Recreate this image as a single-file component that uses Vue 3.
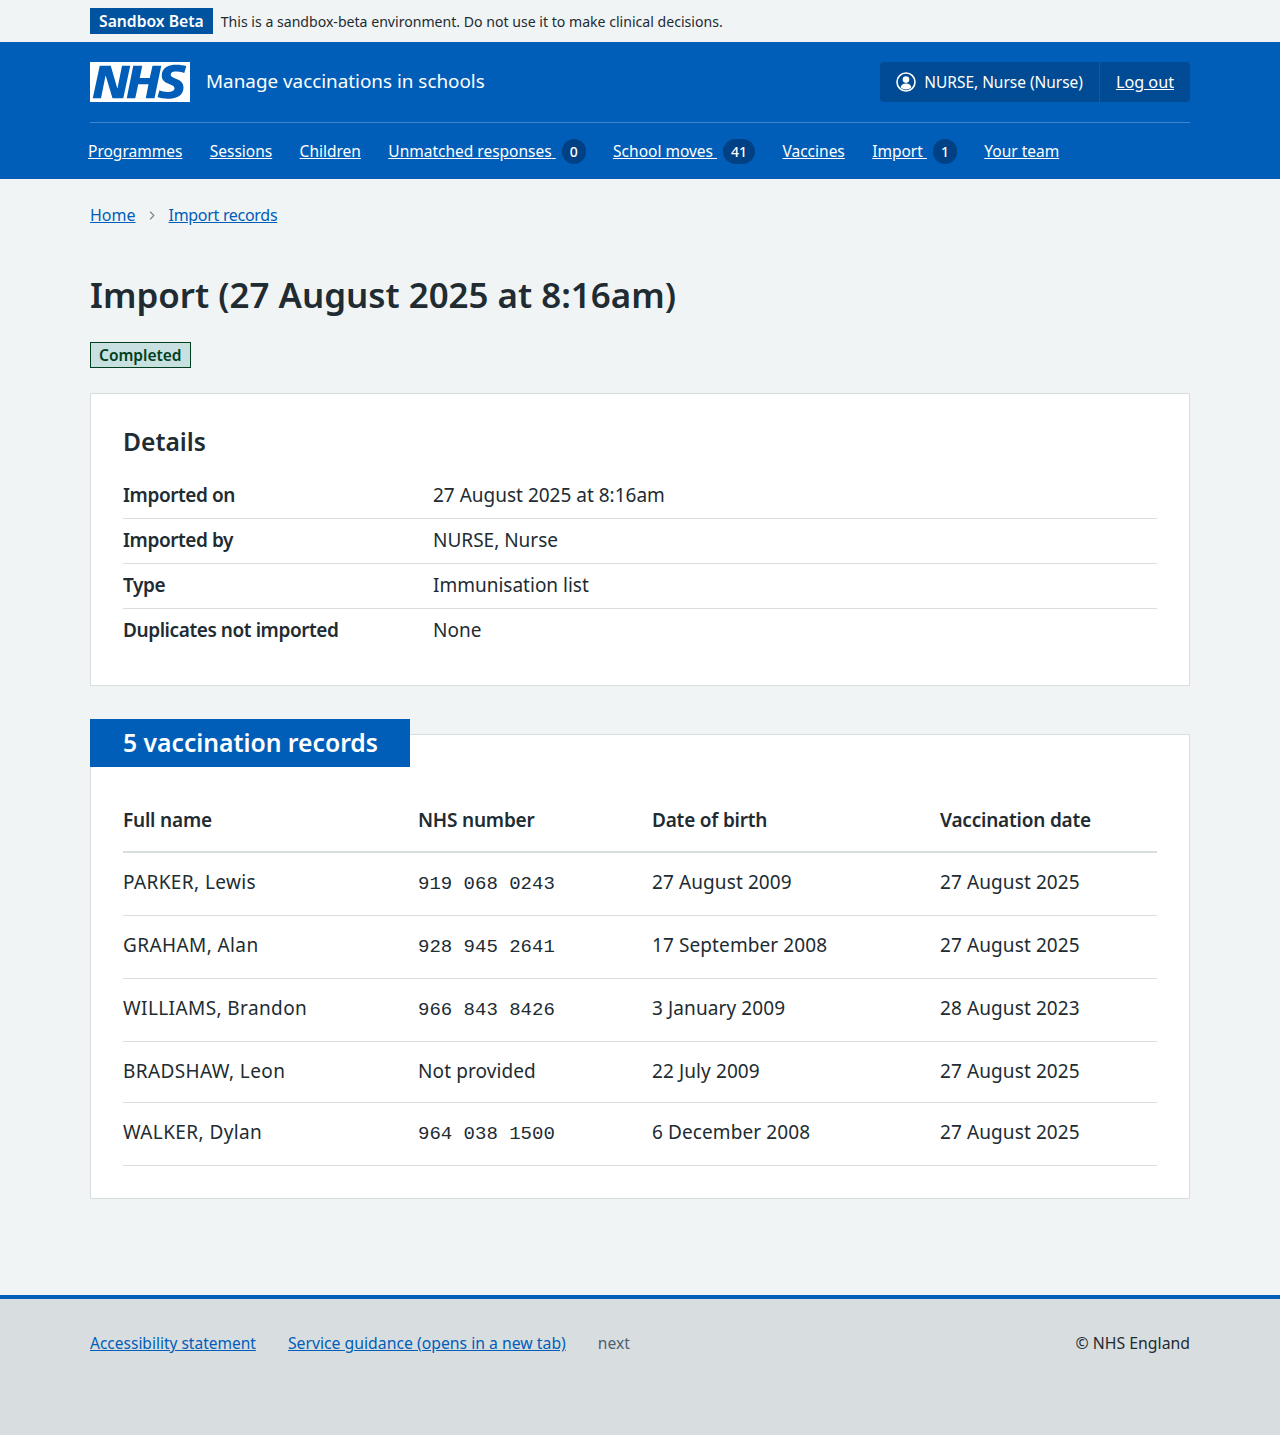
<script setup>
const nav = [
  { label: 'Programmes' },
  { label: 'Sessions' },
  { label: 'Children' },
  { label: 'Unmatched responses', count: 0 },
  { label: 'School moves', count: 41 },
  { label: 'Vaccines' },
  { label: 'Import', count: 1 },
  { label: 'Your team' },
]
const details = [
  ['Imported on', '27 August 2025 at 8:16am'],
  ['Imported by', 'NURSE, Nurse'],
  ['Type', 'Immunisation list'],
  ['Duplicates not imported', 'None'],
]
const records = [
  ['PARKER, Lewis', '919 068 0243', '27 August 2009', '27 August 2025'],
  ['GRAHAM, Alan', '928 945 2641', '17 September 2008', '27 August 2025'],
  ['WILLIAMS, Brandon', '966 843 8426', '3 January 2009', '28 August 2023'],
  ['BRADSHAW, Leon', null, '22 July 2009', '27 August 2025'],
  ['WALKER, Dylan', '964 038 1500', '6 December 2008', '27 August 2025'],
]
</script>

<template>
  <div class="page">
    <div class="banner">
      <div class="wrap banner-in">
        <strong class="sandbox">Sandbox Beta</strong>
        <span class="banner-text">This is a sandbox-beta environment. Do not use it to make clinical decisions.</span>
      </div>
    </div>

    <header class="header">
      <div class="wrap">
        <div class="head-row">
          <a class="brand" href="#">
            <svg class="logo" viewBox="0 0 40 16" width="100" height="40" aria-label="NHS">
              <path fill="#fff" d="M0 0h40v16H0z" />
              <path fill="#005eb8" d="M3.9 1.5h4.4l2.6 9h.1l1.8-9h3.3l-2.8 13H9l-2.7-9h-.1l-1.8 9H1.1M17.3 1.5h3.6l-1 4.9h4L25 1.5h3.5l-2.7 13h-3.5l1.1-5.6h-4.1l-1.2 5.6h-3.4M37.7 4.4c-.7-.3-1.6-.6-2.9-.6-1.4 0-2.5.2-2.5 1.3 0 1.8 5.1 1.2 5.1 5.1 0 3.6-3.3 4.5-6.4 4.5-1.3 0-2.9-.3-4-.7l.8-2.7c.7.4 2.1.7 3.2.7s2.8-.2 2.8-1.5c0-2.1-5.1-1.3-5.1-5 0-3.4 2.9-4.4 5.8-4.4 1.6 0 3.1.2 4 .6" />
            </svg>
            <span class="service">Manage vaccinations in schools</span>
          </a>
          <div class="account">
            <div class="account-user">
              <svg class="user-icon" viewBox="0 0 20 20" width="20" height="20">
                <circle cx="10" cy="10" r="9" fill="none" stroke="#fff" stroke-width="1.6" />
                <circle cx="10" cy="7.6" r="3.3" fill="#fff" />
                <path fill="#fff" d="M4.6 15.4c.5-2.6 2.4-3.9 5.4-3.9s4.900 1.300 5.400 3.900a7.900 7.900 0 0 1-10.800 0z" />
              </svg>
              <span>NURSE, Nurse (Nurse)</span>
            </div>
            <a class="logout" href="#">Log out</a>
          </div>
        </div>
        <nav class="nav">
          <a v-for="item in nav" :key="item.label" class="nav-link" href="#">
            <span class="nav-label">{{ item.label }}<template v-if="item.count !== undefined">&nbsp;</template></span>
            <span v-if="item.count !== undefined" class="count">{{ item.count }}</span>
          </a>
        </nav>
      </div>
    </header>

    <main class="wrap main">
      <div class="crumbs">
        <a class="crumb-home" href="#">Home</a>
        <svg class="chev" viewBox="0 0 8 12" width="6" height="9"><path d="M1.500 1l5 5-5 5" fill="none" stroke="#768692" stroke-width="1.500" /></svg>
        <a class="crumb-link" href="#">Import records</a>
      </div>

      <h1>Import (27 August 2025 at 8:16am)</h1>
      <div class="tag-row"><strong class="tag">Completed</strong></div>

      <section class="card details">
        <h2>Details</h2>
        <dl>
          <div v-for="row in details" :key="row[0]" class="d-row">
            <dt>{{ row[0] }}</dt>
            <dd>{{ row[1] }}</dd>
          </div>
        </dl>
      </section>

      <section class="card records">
        <h2 class="records-title">5 vaccination records</h2>
        <table>
          <colgroup>
            <col class="c1" /><col class="c2" /><col class="c3" /><col class="c4" />
          </colgroup>
          <thead>
            <tr><th>Full name</th><th>NHS number</th><th>Date of birth</th><th>Vaccination date</th></tr>
          </thead>
          <tbody>
            <tr v-for="r in records" :key="r[0]">
              <td class="name">{{ r[0] }}</td>
              <td><span v-if="r[1]" class="mono">{{ r[1] }}</span><template v-else>Not provided</template></td>
              <td>{{ r[2] }}</td>
              <td>{{ r[3] }}</td>
            </tr>
          </tbody>
        </table>
      </section>
    </main>

    <footer class="footer">
      <div class="wrap foot-in">
        <div class="foot-links">
          <a class="foot-a11y" href="#">Accessibility statement</a>
          <a class="foot-guide" href="#">Service guidance (opens in a new tab)</a>
          <span class="next">next</span>
        </div>
        <span class="copy">© NHS England</span>
      </div>
    </footer>
  </div>
</template>

<style>
html, body { margin: 0; background: #f0f4f5; }
</style>

<style scoped>
.page {
  min-height: 1435px;
  display: flex;
  flex-direction: column;
  font-family: "Noto Sans", "Open Sans", sans-serif;
  color: #212b32;
  font-size: 19px;
  line-height: 28px;
  background: #f0f4f5;
}
.wrap { width: 1100px; margin: 0 auto; }
a { color: #005eb8; }

.banner { height: 42px; }
.banner-in { display: flex; align-items: flex-start; gap: 8px; padding-top: 8px; }
.sandbox {
  background: #00539f;
  color: #fff;
  font-size: 15.7px;
  font-weight: 600;
  line-height: 26px;
  padding: 0 9px;
}
.banner-text { font-size: 14.1px; line-height: 26px; padding-top: 1px; }

.header { background: #005eb8; height: 137px; }
.head-row {
  display: flex;
  justify-content: space-between;
  align-items: center;
  padding: 20px 0;
  border-bottom: 1px solid rgba(255, 255, 255, 0.25);
}
.brand { display: flex; align-items: center; gap: 16px; text-decoration: none; color: #fff; }
.logo { display: block; }
.service { font-size: 18.85px; padding-bottom: 2px; }
.account {
  display: flex;
  height: 40px;
  background: #004b93;
  border-radius: 4px;
  font-size: 15.45px;
  color: #fff;
}
.account-user { display: flex; align-items: center; gap: 8px; padding: 0 16px; border-right: 1px solid #005eb8; }
.user-icon { display: block; }
.logout { display: flex; align-items: center; padding: 0 16px; color: #fff; font-size: 16.2px; }

.nav { display: flex; align-items: center; gap: 27.4px; margin-left: -2px; height: 56px; font-size: 15.5px; }
.nav-link { display: flex; align-items: center; color: #fff; text-decoration: none; }
.nav-label { text-decoration: underline; white-space: pre; }
.count {
  height: 25px;
  margin-left: 6px;
  padding: 0 8px;
  box-sizing: border-box;
  border-radius: 13px;
  background: #004084;
  text-align: center;
  font-size: 14px;
  line-height: 25px;
  font-weight: 500;
}

.main { flex: 1; width: 1100px; }
.crumbs { display: flex; align-items: center; gap: 13.5px; padding-top: 24px; font-size: 16px; line-height: 24px; }
.crumb-link { letter-spacing: -0.3px; }
.chev { display: block; }

h1 { margin: 44px 0 23px; font-size: 34.9px; line-height: 48px; font-weight: 600; }
.tag-row { display: flex; }
.tag {
  box-sizing: border-box;
  height: 26px;
  padding: 0 8px;
  background: #c8e1e0;
  border: 1px solid #00401e;
  color: #00401e;
  font-size: 15.5px;
  font-weight: 600;
  line-height: 25px;
}

.card { background: #fff; border: 1px solid #d8dde0; }
.details { margin-top: 25px; padding: 32px; }
h2 { margin: 0 0 16px; font-size: 24.6px; line-height: 32px; font-weight: 600; }
dl { margin: 0; }
.d-row { display: flex; padding: 7px 0 9px; border-bottom: 1px solid #d8dde0; }
.d-row:last-child { border-bottom: 0; }
dt { width: 310px; font-weight: 600; letter-spacing: -0.42px; }
dd { margin: 0; }

.records { margin-top: 48px; padding: 0 32px 32px; }
.records-title {
  width: 320px;
  box-sizing: border-box;
  margin: -16px 0 24px -33px;
  padding: 0 33px;
  background: #005eb8;
  color: #fff;
  font-size: 24.7px;
  line-height: 48px;
  white-space: nowrap;
}
table { width: 1034px; border-collapse: collapse; table-layout: fixed; }
.c1 { width: 295px; }
.c2 { width: 234px; }
.c3 { width: 288px; }
.c4 { width: 217px; }
th { text-align: left; font-weight: 600; padding: 15px 0 17px; border-bottom: 2px solid #d8dde0; letter-spacing: -0.2px; }
td { padding: 15px 0 17px; border-bottom: 1px solid #d8dde0; letter-spacing: 0.1px; vertical-align: top; }
td.name { letter-spacing: 0.4px; }
.mono { font-family: "Liberation Mono", monospace; letter-spacing: 0; }

.footer { border-top: 4px solid #005eb8; background: #d8dde0; height: 140px; box-sizing: border-box; font-size: 15.6px; }
.foot-in { display: flex; justify-content: space-between; padding-top: 32px; line-height: 24px; }
.foot-links { display: flex; gap: 32px; }
.foot-a11y { font-size: 15.5px; }
.foot-guide { font-size: 15.77px; }
.copy { font-size: 15.8px; }
.next { color: #4c6272; }
</style>
